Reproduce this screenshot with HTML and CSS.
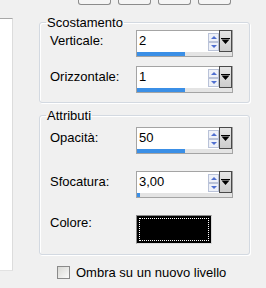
FILE: index.html
```html
<!DOCTYPE html>
<html lang="it">
<head>
  <meta charset="UTF-8">
  <title>Ombra</title>
  <link rel="stylesheet" href="styles.css">
</head>
<body>
  <div class="tabs">
    <span class="tab"></span>
    <span class="tab"></span>
    <span class="tab"></span>
    <span class="tab"></span>
  </div>

  <div class="dialog">
    <div class="preview"></div>

    <div class="controls">
      <fieldset class="group">
        <legend>Scostamento</legend>
        <div class="row">
          <label>Verticale:</label>
          <div class="spin">
            <div class="spin-edit">
              <span class="spin-value">2</span>
              <span class="spin-arrows"><span class="arrow up"></span><span class="arrow down"></span></span>
              <span class="spin-drop"><svg width="9" height="6" viewBox="0 0 9 6"><path d="M0 0h9v1H0z M0.5 1.5h8L4.5 6z" fill="#000"/></svg></span>
            </div>
            <div class="spin-bar"><span class="spin-fill" style="width:51%"></span></div>
          </div>
        </div>
        <div class="row">
          <label>Orizzontale:</label>
          <div class="spin">
            <div class="spin-edit">
              <span class="spin-value">1</span>
              <span class="spin-arrows"><span class="arrow up"></span><span class="arrow down"></span></span>
              <span class="spin-drop"><svg width="9" height="6" viewBox="0 0 9 6"><path d="M0 0h9v1H0z M0.5 1.5h8L4.5 6z" fill="#000"/></svg></span>
            </div>
            <div class="spin-bar"><span class="spin-fill" style="width:50%"></span></div>
          </div>
        </div>
      </fieldset>

      <fieldset class="group group-attr">
        <legend>Attributi</legend>
        <div class="row">
          <label>Opacità:</label>
          <div class="spin">
            <div class="spin-edit">
              <span class="spin-value">50</span>
              <span class="spin-arrows"><span class="arrow up"></span><span class="arrow down"></span></span>
              <span class="spin-drop"><svg width="9" height="6" viewBox="0 0 9 6"><path d="M0 0h9v1H0z M0.5 1.5h8L4.5 6z" fill="#000"/></svg></span>
            </div>
            <div class="spin-bar"><span class="spin-fill" style="width:50%"></span></div>
          </div>
        </div>
        <div class="row">
          <label>Sfocatura:</label>
          <div class="spin">
            <div class="spin-edit">
              <span class="spin-value">3,00</span>
              <span class="spin-arrows"><span class="arrow up"></span><span class="arrow down"></span></span>
              <span class="spin-drop"><svg width="9" height="6" viewBox="0 0 9 6"><path d="M0 0h9v1H0z M0.5 1.5h8L4.5 6z" fill="#000"/></svg></span>
            </div>
            <div class="spin-bar"><span class="spin-fill" style="width:3%"></span></div>
          </div>
        </div>
        <div class="row row-color">
          <label>Colore:</label>
          <div class="swatch"><div class="swatch-focus"></div></div>
        </div>
      </fieldset>

      <label class="check"><span class="check-box"></span>Ombra su un nuovo livello</label>
    </div>
  </div>
</body>
</html>
```

FILE: styles.css
```css
body {
  margin: 0;
  width: 266px;
  height: 288px;
  overflow: hidden;
  background: #f0f0f0;
  color: #000;
  font-family: 'Liberation Sans', Arial, sans-serif;
  font-size: 13px;
}

.tabs {
  display: flex;
  gap: 7px;
  height: 5px;
  padding-left: 78px;
}

.tab {
  width: 31px;
  height: 4px;
  border: 1px solid #8c8c8c;
  border-top: none;
  border-radius: 0 0 3px 3px;
  background: #f5f5f5;
}

.dialog {
  display: flex;
  align-items: flex-start;
}

.preview {
  width: 12px;
  height: 251px;
  margin-top: 13px;
  background: #fff;
  border-top: 1px solid #a8a8a8;
  border-right: 1px solid #dcdcdc;
  border-bottom: 1px solid #e2e2e2;
}

.controls {
  margin-left: 26px;
}

.group {
  box-sizing: border-box;
  width: 211px;
  margin: 10px 0 0;
  padding: 0 6px 9px;
  border: 1px solid #d3d9e1;
  border-radius: 3px;
  box-shadow: 1px 1px 0 #fff, inset 1px 1px 0 #fff;
}

.group legend {
  padding: 0 1px;
  line-height: 15px;
}

.group-attr {
  margin-top: 5px;
  padding-top: 4px;
  padding-bottom: 10px;
}

.row {
  display: flex;
  align-items: flex-start;
  padding-left: 4px;
}

.row + .row {
  margin-top: 9px;
}

.group-attr .row + .row {
  margin-top: 17px;
}

.group-attr .row-color {
  margin-top: 15px;
}

.row label {
  width: 86px;
  padding-top: 3px;
  line-height: 15px;
}

.row-color label {
  padding-top: 0;
}

/* spin edit with slider */
.spin {
  box-sizing: border-box;
  width: 97px;
  border: 1px solid #a4a4a4;
  background: #fff;
}

.spin-edit {
  display: flex;
  height: 21px;
}

.spin-value {
  flex: 1;
  padding-left: 2px;
  line-height: 19px;
}

.spin-arrows {
  display: flex;
  flex-direction: column;
  width: 11px;
  padding-top: 2px;
}

.arrow {
  box-sizing: border-box;
  height: 9px;
  border: 1px solid #b9c2d8;
  background: #eef1f8;
  display: flex;
  align-items: center;
  justify-content: center;
}

.arrow::before {
  content: '';
  border-left: 3px solid transparent;
  border-right: 3px solid transparent;
}

.arrow.up::before {
  border-bottom: 3px solid #4f6fd0;
}

.arrow.down::before {
  border-top: 3px solid #4f6fd0;
}

.spin-drop {
  box-sizing: border-box;
  width: 13px;
  height: 22px;
  margin-top: -1px;
  border: 1px solid #4a4a4a;
  background: linear-gradient(#e6e6e6, #cdcdcd);
  display: flex;
  align-items: center;
  justify-content: center;
}

.spin-bar {
  height: 4px;
  background: #e4e4e4;
}

.spin-fill {
  display: block;
  height: 100%;
  background: #3b8fe6;
}

.swatch {
  box-sizing: border-box;
  width: 76px;
  height: 29px;
  padding: 2px;
  border: 1px solid #8a8a8a;
  border-right-color: #d8d8d8;
  border-bottom-color: #d8d8d8;
  background: #000;
}

.swatch-focus {
  box-sizing: border-box;
  height: 100%;
  border: 1px dotted #fff;
}

.check {
  display: flex;
  align-items: center;
  gap: 6px;
  margin: 10px 0 0 18px;
}

.check-box {
  box-sizing: border-box;
  width: 13px;
  height: 13px;
  border: 1px solid #8a8a8a;
  background: linear-gradient(135deg, #d8d8d4, #fafafa);
}
```
